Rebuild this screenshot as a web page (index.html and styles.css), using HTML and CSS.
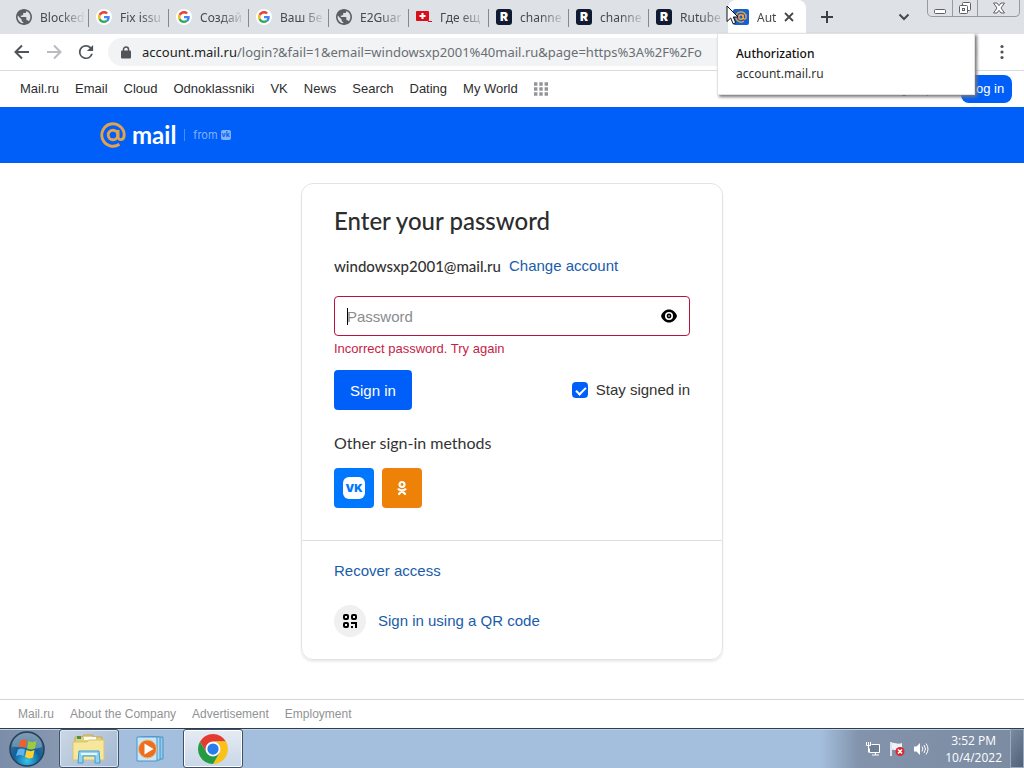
FILE: index.html
```html
<!DOCTYPE html>
<html lang="en">
<head>
<meta charset="utf-8">
<meta name="viewport" content="width=device-width, initial-scale=1">
<title>Authorization</title>
<link rel="stylesheet" href="styles.css">
</head>
<body>
<svg class="defs" aria-hidden="true">
  <symbol id="globe" viewBox="2 2 20 20"><path fill="#5a5f64" d="M12 2C6.48 2 2 6.48 2 12s4.48 10 10 10 10-4.48 10-10S17.52 2 12 2zm-1 17.93c-3.95-.49-7-3.85-7-7.93 0-.62.08-1.21.21-1.79L9 15v1c0 1.1.9 2 2 2v1.93zm6.9-2.54c-.26-.81-1-1.39-1.9-1.39h-1v-3c0-.55-.45-1-1-1H8v-2h2c.55 0 1-.45 1-1V7h2c1.1 0 2-.9 2-2v-.41c2.93 1.19 5 4.06 5 7.41 0 2.08-.8 3.97-2.1 5.39z"/></symbol>
  <symbol id="google" viewBox="-8 -8 64 64"><circle cx="24" cy="24" r="32" fill="#fff"/><path fill="#ea4335" d="M24 9.5c3.54 0 6.71 1.22 9.21 3.6l6.85-6.85C35.9 2.38 30.47 0 24 0 14.62 0 6.51 5.38 2.56 13.22l7.98 6.19C12.43 13.72 17.74 9.5 24 9.5z"/><path fill="#4285f4" d="M46.98 24.55c0-1.57-.15-3.09-.38-4.55H24v9.02h12.94c-.58 2.96-2.26 5.48-4.78 7.18l7.73 6c4.51-4.18 7.09-10.36 7.09-17.65z"/><path fill="#fbbc05" d="M10.53 28.59c-.48-1.45-.76-2.99-.76-4.59s.27-3.14.76-4.59l-7.98-6.19C.92 16.46 0 20.12 0 24c0 3.88.92 7.54 2.56 10.78l7.97-6.19z"/><path fill="#34a853" d="M24 48c6.48 0 11.93-2.13 15.89-5.81l-7.73-6c-2.15 1.45-4.92 2.3-8.16 2.3-6.26 0-11.57-4.22-13.47-9.91l-7.98 6.19C6.51 42.62 14.62 48 24 48z"/></symbol>
  <symbol id="at" viewBox="0 0 26 26"><g fill="none" stroke="currentColor" stroke-width="2.9"><circle cx="13" cy="13" r="4.800"/><path d="M18 8v6.600c0 4.400 6.200 4.200 6.200-1.600A11.200 11.200 0 1 0 19.400 22.200"/></g></symbol>
</svg>

<header class="tabstrip">
  <div class="tabs" role="tablist">
    <button class="tab" role="tab"><svg class="favicon"><use href="#globe"/></svg><span class="tab-title">Blocked</span></button>
    <button class="tab" role="tab"><svg class="favicon"><use href="#google"/></svg><span class="tab-title">Fix issu</span></button>
    <button class="tab" role="tab"><svg class="favicon"><use href="#google"/></svg><span class="tab-title">Создай</span></button>
    <button class="tab" role="tab"><svg class="favicon"><use href="#google"/></svg><span class="tab-title">Ваш Бе</span></button>
    <button class="tab" role="tab"><svg class="favicon"><use href="#globe"/></svg><span class="tab-title">E2Guar</span></button>
    <button class="tab" role="tab"><svg class="favicon" viewBox="0 0 16 16"><rect y="2" width="13" height="10" rx="1" fill="#d9101c"/><path d="M6.500 4v6M3.500 7h6" stroke="#fff" stroke-width="2"/><path d="M12 12.500h4" stroke="#d9101c"/></svg><span class="tab-title">Где ещ</span></button>
    <button class="tab" role="tab"><span class="favicon rutube">R</span><span class="tab-title">channe</span></button>
    <button class="tab" role="tab"><span class="favicon rutube">R</span><span class="tab-title">channe</span></button>
    <button class="tab" role="tab"><span class="favicon rutube">R</span><span class="tab-title">Rutube</span></button>
    <div class="tab active" role="tab" aria-selected="true"><span class="favicon mailicon"><svg viewBox="0 0 26 26"><use href="#at"/></svg></span><span class="tab-title">Aut</span><button class="close" aria-label="Close tab"><svg viewBox="0 0 10 10"><path d="M1 1l8 8M9 1L1 9" stroke="#45494d" stroke-width="1.800"/></svg></button></div>
  </div>
  <button class="icon-btn new-tab" aria-label="New tab"><svg viewBox="0 0 12 12"><path d="M6 0v12M0 6h12" stroke="#3c4043" stroke-width="2"/></svg></button>
  <span class="spacer"></span>
  <button class="icon-btn search-tabs" aria-label="Search tabs"><svg viewBox="0 0 12 12"><path d="M1.500 3.500L6 8l4.500-4.500" fill="none" stroke="#45494d" stroke-width="2"/></svg></button>
  <div class="window-controls">
    <button aria-label="Minimize"><svg viewBox="0 0 14 14"><rect x="1.500" y="8.500" width="11" height="4" rx="1" fill="#fff" stroke="#5c6168"/></svg></button>
    <button aria-label="Restore"><svg viewBox="0 0 14 14" fill="#fff" stroke="#5c6168"><rect x="4.500" y="1.500" width="8" height="8" rx="1"/><rect x="1.500" y="4.500" width="8" height="8" rx="1"/><rect x="4.500" y="7.500" width="2" height="2"/></svg></button>
    <button class="win-close" aria-label="Close"><svg viewBox="0 0 14 14"><path d="M1.500 2h3.500l2 2.700L9 2h3.500L9 7l3.500 5H9L7 9.300 5 12H1.500L5 7z" fill="#fff" stroke="#5c6168"/></svg></button>
  </div>
  <div class="tooltip" role="tooltip"><strong>Authorization</strong><span>account.mail.ru</span></div>
  <svg class="cursor" viewBox="0 0 12 20"><path d="M1 1v15.500l3.700-3.500 2.400 5.800 2.600-1.100L7.300 12H12z" fill="#fff" stroke="#111"/></svg>
</header>

<div class="toolbar">
  <button class="icon-btn" aria-label="Back"><svg viewBox="0 0 16 16"><path d="M15 8H2M8 1.500L1.500 8 8 14.500" fill="none" stroke="#505357" stroke-width="2"/></svg></button>
  <button class="icon-btn" aria-label="Forward"><svg viewBox="0 0 16 16"><path d="M1 8h13M8 1.500L14.500 8 8 14.500" fill="none" stroke="#b9bbbe" stroke-width="2"/></svg></button>
  <button class="icon-btn" aria-label="Reload"><svg viewBox="3 3 18 18"><path fill="#505357" d="M17.650 6.350A7.960 7.960 0 0 0 12 4a8 8 0 1 0 7.730 10h-2.080A6 6 0 1 1 12 6c1.660 0 3.140.69 4.220 1.780L13 11h7V4z"/></svg></button>
  <div class="address">
    <svg class="lock" viewBox="0 0 10 13"><path d="M2.500 6V3.500a2.500 2.500 0 0 1 5 0V6" fill="none" stroke="#505357" stroke-width="1.500"/><rect y="4.500" width="10" height="8" rx="1" fill="#505357"/></svg>
    <span class="url"><b>account.mail.ru</b>/login?&amp;fail=1&amp;email=windowsxp2001%40mail.ru&amp;page=https%3A%2F%2Fo</span>
  </div>
  <button class="icon-btn" aria-label="Menu"><svg viewBox="0 0 16 16" fill="#505357"><circle cx="8" cy="2.500" r="1.600"/><circle cx="8" cy="8" r="1.600"/><circle cx="8" cy="13.500" r="1.600"/></svg></button>
</div>

<nav class="portal">
  <a href="#">Mail.ru</a><a href="#">Email</a><a href="#">Cloud</a><a href="#">Odnoklassniki</a><a href="#">VK</a><a href="#">News</a><a href="#">Search</a><a href="#">Dating</a><a href="#">My World</a>
  <a href="#" class="apps" aria-label="All projects"><svg viewBox="0 0 14 14"><path d="M0 2h14M0 7h14M0 12h14" stroke="#929497" stroke-width="3.400" stroke-dasharray="3.400 1.900"/></svg></a>
  <span class="spacer"></span>
  <a href="#">Sign up</a>
  <button class="login">Log in</button>
</nav>

<div class="brandbar">
  <a href="#" class="brand"><svg viewBox="0 0 26 26"><use href="#at"/></svg><span class="brand-name">mail</span></a>
  <span class="from">from <span class="vk-mini">vk</span></span>
</div>

<main>
  <section class="card">
    <form class="signin">
      <h1>Enter your password</h1>
      <p class="account"><span>windowsxp2001@mail.ru</span><a href="#">Change account</a></p>
      <div class="field">
        <input type="password" placeholder="Password" aria-label="Password" aria-invalid="true" aria-describedby="error">
        <i class="caret"></i>
        <button type="button" class="reveal" aria-label="Show password"><svg viewBox="0 0 16 14"><path d="M8 .5C4.300.5 1.400 3 0 7c1.400 4 4.300 6.500 8 6.500s6.600-2.500 8-6.500C14.600 3 11.700.5 8 .5z"/><circle cx="8" cy="7" r="4" fill="#fff"/><circle cx="8" cy="7" r="2.400"/><circle cx="8" cy="7" r=".8" fill="#fff"/></svg></button>
      </div>
      <p class="error" id="error">Incorrect password. Try again</p>
      <div class="actions">
        <button type="button" class="submit">Sign in</button>
        <label class="stay"><input type="checkbox" checked><span>Stay signed in</span></label>
      </div>
      <h2>Other sign-in methods</h2>
      <div class="socials">
        <button type="button" class="social vk" aria-label="Sign in with VK"><span>VK</span></button>
        <button type="button" class="social ok" aria-label="Sign in with Odnoklassniki"><svg viewBox="0 0 10 16" fill="none" stroke="#fff" stroke-width="2.200" stroke-linecap="round"><circle cx="5" cy="4.500" r="2.500"/><path d="M1.500 9.300c2.300 1.300 4.700 1.300 7 0M5 10.800l-3 3.200M5 10.800l3 3.200"/></svg></button>
      </div>
    </form>
    <div class="alternatives">
      <a href="#">Recover access</a>
      <a href="#" class="qr"><span class="qr-icon"><svg viewBox="0 0 14 14"><g fill="none" stroke="#000" stroke-width="2"><rect x="1" y="1" width="4" height="4" rx="1"/><rect x="9" y="1" width="4" height="4" rx="1"/><rect x="1" y="9" width="4" height="4" rx="1"/><path d="M8 9h5v5"/></g><rect x="8" y="12" width="2" height="2"/></svg></span><span>Sign in using a QR code</span></a>
    </div>
  </section>
</main>

<footer class="links"><a href="#">Mail.ru</a><a href="#">About the Company</a><a href="#">Advertisement</a><a href="#">Employment</a></footer>

<div class="taskbar">
  <button class="start" aria-label="Start"><svg viewBox="0 0 36 36"><defs><radialGradient id="orb" cx=".5" cy=".85" r=".8"><stop offset="0" stop-color="#35c4ee"/><stop offset=".5" stop-color="#12609a"/><stop offset="1" stop-color="#4d7390"/></radialGradient></defs><circle cx="18" cy="18" r="17" fill="url(#orb)" stroke="#24415d" stroke-width="1.500"/><path d="M3 16a15 14 0 0 1 30 0c-9 4-21-1-30 0z" fill="#fff" opacity=".28"/><path d="M11 10c2-2 5-2 7-.5L16.500 17c-3-2-5-1.500-7-.5z" fill="#f0602a"/><path d="M19.500 10c3 1.500 5 1.500 8 0L26 17.500c-3 1.500-5 1.200-8 0z" fill="#9ccb3b"/><path d="M9 18.500c2-1.500 5-1.500 7 0L14.500 25c-2-1.500-5-1.500-7.500 0z" fill="#5fb4ee"/><path d="M17.500 19c3 1.500 5 1.500 8 0L24 26.500c-3 1.500-5 1-8-.5z" fill="#ffd02e"/></svg></button>
  <button class="task open" aria-label="Windows Explorer"><svg viewBox="0 0 34 32"><path d="M3 4h7l2-2h9v2h9v22H3z" fill="#e5cf7b" stroke="#c6a850"/><path d="M5 3h4v3H5z" fill="#3a9a45"/><path d="M12 4h12v3H12z" fill="#fafafa"/><path d="M21 7h7v2h-7z" fill="#3e78c8"/><path d="M1 9h14l2-2h15v20H1z" fill="#f6e79d" stroke="#dac36e"/><path d="M6 30l1-12h20l1 12h-5v-7H11v7z" fill="#93d3f2" stroke="#3e9cd0"/><path d="M9 21h16" stroke="#e4f7ff" stroke-width="2"/></svg></button>
  <button class="task" aria-label="Windows Media Player"><svg viewBox="0 0 34 32"><path d="M9 4h20v22H9z" fill="#8ec9ee" stroke="#4d93c4"/><path d="M6 4h20v23H6z" fill="#a9dbf5" stroke="#4d93c4"/><path d="M3 4h20v24H3z" fill="#c4e8fa" stroke="#4d93c4"/><circle cx="13.500" cy="16" r="9" fill="#ec6f20" stroke="#f7b27c"/><path d="M10.500 10.500v11l9-5.500z" fill="#fff"/></svg></button>
  <button class="task open current" aria-label="Google Chrome"><svg viewBox="0 0 48 48"><path fill="#e33b2e" d="M24 12h20.780A24 24 0 0 0 3.220 12L13.610 30A12 12 0 0 1 24 12z"/><path fill="#fbc116" d="M34.390 30L24 48a24 24 0 0 0 20.780-36H24a12 12 0 0 1 10.390 18z"/><path fill="#249a41" d="M13.610 30L3.220 12A24 24 0 0 0 24 48l10.390-18a12 12 0 0 1-20.780 0z"/><circle cx="24" cy="24" r="11.500" fill="#fff"/><circle cx="24" cy="24" r="9" fill="#2a7de8"/></svg></button>
  <span class="spacer"></span>
  <div class="tray">
    <svg viewBox="0 0 16 16" fill="none" stroke="#fff"><path d="M6.500 3.500h8v8h-10v-4" fill="#6f8095"/><path d="M7 14h7M10.500 12v2M1.500 1v3.500h4V1M3.500 1v3M3.500 4.500v7"/></svg>
    <svg viewBox="0 0 16 16"><path d="M2 1v14" stroke="#fff" stroke-width="1.500"/><path d="M3 2c3-1 5 2 10 0v7c-4 2-6-1-10 0z" fill="#eef2f6"/><circle cx="11" cy="10.500" r="4.500" fill="#d8282f"/><path d="M9 8.500l4 4M13 8.500l-4 4" stroke="#fff" stroke-width="1.600"/></svg>
    <svg viewBox="0 0 16 16"><path d="M1 5.500h2.500L7 2v12l-3.500-3.500H1z" fill="#fff"/><path d="M9 5.500q1.800 2.500 0 5M11 4q3 4 0 8M13 2.500q4 5.500 0 11" fill="none" stroke="#fff"/></svg>
  </div>
  <div class="clock"><time>3:52 PM</time><time>10/4/2022</time></div>
  <button class="show-desktop" aria-label="Show desktop"></button>
</div>
</body>
</html>
```

FILE: styles.css
```css
* { box-sizing: border-box; }
body {
  margin: 0;
  min-height: 100vh;
  display: flex;
  flex-direction: column;
  background: #fff;
  color: #333;
  font-family: "Liberation Sans", Arial, sans-serif;
  font-size: 15px;
}
button { border: 0; padding: 0; background: none; font: inherit; color: inherit; }
a { color: #1a5cab; text-decoration: none; }
svg { display: block; }
h1, h2, p { margin: 0; }
.defs { position: absolute; width: 0; height: 0; }
.spacer { flex: 1; }

/* Tab strip */
.tabstrip {
  position: relative;
  display: flex;
  height: 34px;
  background: #dee1e6;
  font-family: "Noto Sans", "Open Sans", sans-serif;
  font-size: 12px;
  color: #45494d;
}
.tabs { display: flex; padding-left: 8px; }
.tab {
  position: relative;
  display: flex;
  align-items: center;
  gap: 8px;
  width: 80px;
  padding: 0 0 0 8px;
}
.tab:not(.active, :nth-child(9))::after {
  content: "";
  position: absolute;
  right: -1px;
  top: 9px;
  width: 1px;
  height: 18px;
  background: #85898e;
}
.favicon { flex: none; width: 16px; height: 16px; }
.tab-title {
  white-space: nowrap;
  text-align: left;
  -webkit-mask-image: linear-gradient(90deg, #000 20px, transparent 46px);
  mask-image: linear-gradient(90deg, #000 20px, transparent 46px);
}
.rutube {
  border-radius: 3px;
  background: #101a30;
  color: #fff;
  font: 900 12px/16px Inter, sans-serif;
  text-align: center;
}
.tab.active { width: 78px; padding: 0 12px 0 5px; background: #fff; border-radius: 8px 8px 0 0; }
.active .tab-title { flex: 1; }
.mailicon { background: #1760cf; color: #f4a53a; padding: 2px; border-radius: 2px; }
.mailicon svg { width: 12px; height: 12px; }
.close svg { width: 10px; height: 10px; }
.icon-btn { display: grid; place-items: center; width: 16px; }
.icon-btn svg { width: 16px; height: 16px; }
.new-tab { margin-left: 13px; }
.new-tab svg, .search-tabs svg { width: 12px; height: 12px; }
.window-controls {
  display: flex;
  height: 17px;
  margin: 0 4px 0 15px;
  border: 1px solid #969ba3;
  border-top: 0;
  border-radius: 0 0 5px 5px;
}
.window-controls button { display: grid; place-items: center; width: 25px; border-right: 1px solid #969ba3; }
.window-controls .win-close { width: 41px; border: 0; }
.window-controls svg { width: 14px; height: 14px; }
.tooltip {
  position: absolute;
  z-index: 2;
  top: 33px;
  left: 717px;
  width: 258px;
  padding: 10px 18px;
  display: flex;
  flex-direction: column;
  background: #fff;
  border: 1px solid #e2e2e2;
  box-shadow: 2px 2px 3px #777;
  line-height: 20px;
  color: #333;
}
.tooltip strong { font-weight: 500; color: #111; }
.cursor { position: absolute; z-index: 3; left: 726px; top: 5px; width: 12px; height: 20px; }

/* Toolbar */
.toolbar {
  display: flex;
  align-items: center;
  gap: 16px;
  height: 37px;
  padding: 0 14px;
  border-bottom: 1px solid #d8dadd;
}
.address {
  flex: 1;
  min-width: 0;
  display: flex;
  align-items: center;
  gap: 11px;
  height: 28px;
  margin-left: -2px;
  padding: 0 13px;
  border-radius: 14px;
  background: #f1f3f4;
}
.lock { width: 10px; height: 13px; flex: none; }
.url {
  overflow: hidden;
  white-space: nowrap;
  font-family: "Noto Sans", "Open Sans", sans-serif;
  font-size: 13px;
  color: #6a6e73;
}
.url b { font-weight: 400; color: #222; }

/* Portal navigation */
.portal {
  display: flex;
  align-items: center;
  gap: 16px;
  height: 36px;
  padding: 0 12px 0 20px;
  font-size: 13px;
  line-height: 18px;
}
.portal a { color: #2c2d2e; white-space: nowrap; }
.portal .apps svg { width: 14px; height: 14px; }
.login {
  height: 28px;
  width: 51px;
  margin-left: 12px;
  border-radius: 8px;
  background: #005ff9;
  color: #fff;
}
.brandbar {
  display: flex;
  align-items: center;
  gap: 8px;
  height: 56px;
  padding: 0 100px;
  background: #005ff9;
}
.brand { display: flex; align-items: center; gap: 6px; color: #fff; }
.brand svg { width: 26px; height: 26px; color: #e2a24e; }
.brand-name { font: bold 24px/28px Lato, sans-serif; }
.from {
  display: flex;
  align-items: center;
  gap: 3px;
  padding-left: 8px;
  border-left: 1px solid #4a8dfb;
  font: 11px/12px Inter, sans-serif;
  color: #80b0fc;
}
.vk-mini {
  width: 10px;
  height: 10px;
  border-radius: 2px;
  background: #80b0fc;
  color: #005ff9;
  font: bold 7px/10px Inter, sans-serif;
  text-align: center;
}

/* Sign-in card */
main { flex: 1; padding: 20px 16px; }
.card {
  width: 100%;
  max-width: 422px;
  margin: 0 auto;
  border: 1px solid #e1e3e6;
  border-radius: 12px;
  box-shadow: 0 2px 2px #ececee;
}
.signin { padding: 21px 32px 32px; }
h1 { font: 500 24px/32px Lato, sans-serif; color: #2c2d2e; }
.account { display: flex; gap: 8px; margin-top: 17px; line-height: 24px; white-space: nowrap; }
.account span { font-family: Lato, sans-serif; font-weight: 500; }
.field { position: relative; margin-top: 18px; }
.field input {
  display: block;
  width: 100%;
  height: 40px;
  padding: 0 44px 0 12px;
  border: 1px solid #b8133f;
  border-radius: 4px;
  font: inherit;
}
.field input::placeholder { color: #8a8c8f; }
.caret { position: absolute; left: 13px; top: 12px; width: 1px; height: 17px; background: #000; }
.reveal { position: absolute; right: 13px; top: 13px; }
.reveal svg { width: 16px; height: 14px; }
.error { margin-top: 5px; font-size: 13px; line-height: 16px; color: #c71c46; }
.actions { display: flex; justify-content: space-between; align-items: center; margin-top: 13px; }
.submit { height: 40px; padding: 0 16px; border-radius: 4px; background: #005ff9; color: #fff; }
.stay { display: flex; align-items: center; gap: 8px; line-height: 20px; }
.stay input {
  appearance: none;
  position: relative;
  width: 16px;
  height: 16px;
  margin: 0;
  border-radius: 4px;
  background: #005ff9;
}
.stay input:checked::after {
  content: "";
  position: absolute;
  left: 6px;
  top: 3px;
  width: 4px;
  height: 8px;
  border: solid #fff;
  border-width: 0 2px 2px 0;
  rotate: 45deg;
}
h2 { margin-top: 23px; font: 400 16px/20px Lato, sans-serif; }
.socials { display: flex; gap: 8px; margin-top: 15px; }
.social { display: grid; place-items: center; width: 40px; height: 40px; border-radius: 4px; }
.vk { background: #07f; }
.vk span {
  width: 22px;
  height: 22px;
  border-radius: 6px;
  background: #fff;
  color: #07f;
  font: 900 11px/22px Inter, sans-serif;
  text-align: center;
}
.ok { background: #ee8208; }
.ok svg { width: 10px; height: 16px; }
.alternatives {
  display: flex;
  flex-direction: column;
  align-items: flex-start;
  gap: 24px;
  padding: 20px 32px 22px;
  border-top: 1px solid #dcdee0;
  line-height: 20px;
}
.qr { display: flex; align-items: center; gap: 12px; }
.qr-icon { display: grid; place-items: center; width: 32px; height: 32px; border-radius: 50%; background: #f0f0f0; }
.qr-icon svg { width: 14px; height: 14px; }
.links {
  display: flex;
  align-items: center;
  gap: 16px;
  height: 29px;
  padding: 0 18px;
  border-top: 1px solid #d3d4d6;
  font-size: 12px;
}
.links a { color: #919395; }

/* Taskbar */
.taskbar {
  display: flex;
  align-items: center;
  height: 40px;
  border-top: 1px solid #2e3c50;
  background: linear-gradient(90deg, #7b8da8 0, #8797b0 58px, #a4bfdd 62px, #a4bfdd calc(100% - 204px), #8293ab calc(100% - 165px), #7b8ba2 100%);
  box-shadow: inset 0 1px #c3d3e5;
}
.start { margin: 0 14px 0 9px; }
.start svg { width: 36px; height: 36px; }
.task { display: grid; place-items: center; width: 60px; height: 39px; margin-right: 2px; border: 1px solid transparent; border-radius: 3px; }
.task svg { width: 34px; height: 32px; }
.open { border-color: #3f5068; background: linear-gradient(135deg, #cbd7e5, #a3b8d1); box-shadow: inset 0 0 0 1px #dce6f0; }
.current { background: linear-gradient(#e6ebf2, #c8d7e8); box-shadow: inset 0 0 0 1px #fff; }
.task.current svg { width: 30px; height: 30px; }
.tray { display: flex; gap: 8px; margin-right: 16px; }
.tray svg { width: 16px; height: 16px; }
.clock {
  display: flex;
  flex-direction: column;
  align-items: center;
  margin-right: 8px;
  font: 12px/17px "Open Sans", sans-serif;
  color: #fff;
}
.show-desktop { width: 14px; height: 39px; border: 1px solid #9babc0; background: linear-gradient(120deg, #7b8ba2, #4f6078); }
```
